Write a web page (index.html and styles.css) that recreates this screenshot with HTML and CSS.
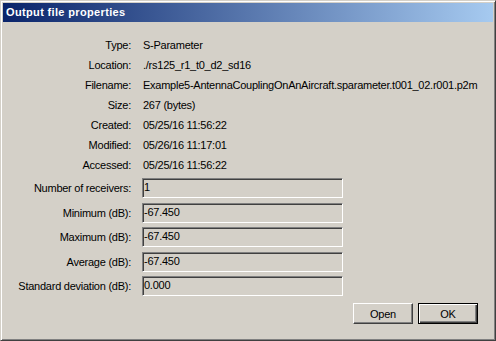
FILE: index.html
```html
<!DOCTYPE html>
<html lang="en">
<head>
    <meta charset="UTF-8">
    <title>Output file properties</title>
    <link rel="stylesheet" href="styles.css">
</head>
<body>
    <!-- Dialog window -->
    <div class="dialog">
        <div class="titlebar">Output file properties</div>

        <div class="props">
            <span class="label">Type:</span><span class="value">S-Parameter</span>
            <span class="label">Location:</span><span class="value">./rs125_r1_t0_d2_sd16</span>
            <span class="label">Filename:</span><span class="value">Example5-AntennaCouplingOnAnAircraft.sparameter.t001_02.r001.p2m</span>
            <span class="label">Size:</span><span class="value">267 (bytes)</span>
            <span class="label">Created:</span><span class="value">05/25/16 11:56:22</span>
            <span class="label">Modified:</span><span class="value">05/26/16 11:17:01</span>
            <span class="label">Accessed:</span><span class="value">05/25/16 11:56:22</span>
        </div>

        <div class="fields">
            <span class="label">Number of receivers:</span><div class="field">1</div>
            <span class="label">Minimum (dB):</span><div class="field">-67.450</div>
            <span class="label">Maximum (dB):</span><div class="field">-67.450</div>
            <span class="label">Average (dB):</span><div class="field">-67.450</div>
            <span class="label">Standard deviation (dB):</span><div class="field">0.000</div>
        </div>

        <div class="buttons">
            <button class="btn">Open</button>
            <button class="btn btn-default">OK</button>
        </div>
    </div>
</body>
</html>
```
FILE: styles.css
```css
/* General */
body {
    margin: 0;
    padding: 0;
    background-color: #d4d0c8;
    font-family: 'Liberation Sans', Arial, sans-serif;
    font-size: 11px;
    letter-spacing: -0.25px;
    color: #000;
}

/* Window frame */
.dialog {
    box-sizing: border-box;
    width: 496px;
    height: 341px;
    padding: 2px;
    background-color: #d4d0c8;
    border: 1px solid;
    border-color: #d4d0c8 #404040 #404040 #d4d0c8;
    box-shadow: inset 1px 1px #ffffff, inset -1px -1px #808080;
}

.titlebar {
    height: 19px;
    line-height: 19px;
    padding-left: 3px;
    color: #ffffff;
    font-weight: bold;
    letter-spacing: 0.35px;
    background: linear-gradient(to right, #0a246a, #a6caf0);
}

/* Property rows */
.props,
.fields {
    display: grid;
    grid-template-columns: 128px 1fr;
    column-gap: 11px;
    align-items: center;
}

.props {
    margin-top: 13px;
    grid-auto-rows: 20px;
}

.fields {
    margin-top: 1px;
    grid-auto-rows: 24.5px;
}

.label {
    text-align: right;
    white-space: nowrap;
}

.value {
    padding-left: 1px;
    white-space: nowrap;
}

.field {
    box-sizing: border-box;
    width: 201px;
    height: 20px;
    line-height: 16px;
    padding-left: 1px;
    border: 1px solid;
    border-color: #808080 #ffffff #ffffff #808080;
    box-shadow: inset 1px 1px #404040, inset -1px -1px #d4d0c8;
}

/* Buttons */
.buttons {
    display: flex;
    justify-content: flex-end;
    gap: 5px;
    margin-top: 4.5px;
    padding-right: 15px;
}

.btn {
    box-sizing: border-box;
    width: 60px;
    height: 21px;
    padding: 0;
    font-family: inherit;
    font-size: 11px;
    letter-spacing: inherit;
    color: #000;
    background-color: #d4d0c8;
    border: 1px solid;
    border-color: #ffffff #404040 #404040 #ffffff;
    box-shadow: inset -1px -1px #808080;
}

.btn-default {
    border: 1px solid #000;
    box-shadow: inset 1px 1px #ffffff, inset -1px -1px #404040, inset -2px -2px #808080;
}
```
